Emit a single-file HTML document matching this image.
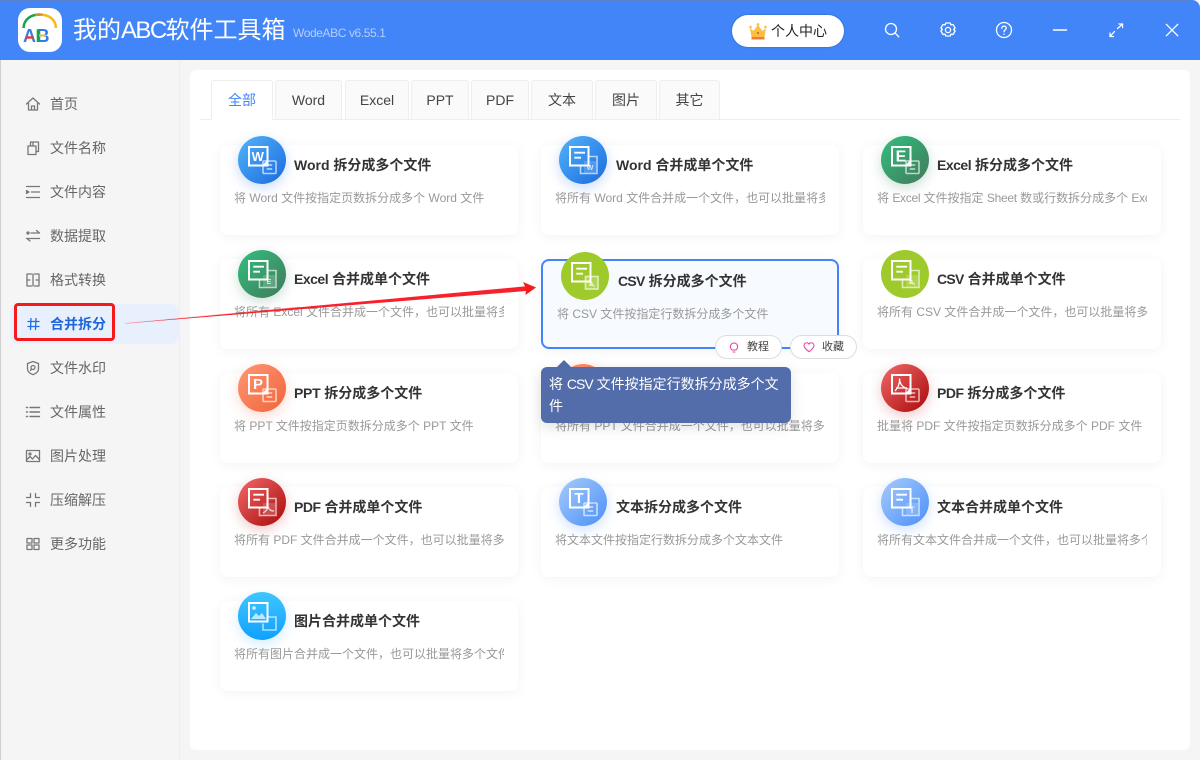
<!DOCTYPE html>
<html lang="zh"><head><meta charset="utf-8"><title>我的ABC软件工具箱</title>
<style>
*{box-sizing:border-box;margin:0;padding:0}
html,body{width:1200px;height:760px;overflow:hidden;background:#f5f5f5;font-family:"Liberation Sans","Noto Sans CJK SC",sans-serif}
.abs{position:absolute}
#hd{position:absolute;left:0;top:0;width:1200px;height:60px;background:#4285f8;border-top-right-radius:8px}
#title{position:absolute;left:73px;top:16px;font-size:24px;line-height:30px;color:#fff;white-space:nowrap}
#title span{letter-spacing:-1.6px}
#ver{position:absolute;left:293px;top:24px;font-size:12px;line-height:18px;letter-spacing:-.4px;color:rgba(255,255,255,.6);white-space:nowrap}
#pill{position:absolute;left:732px;top:15px;width:112px;height:32px;border-radius:16px;background:#fff;box-shadow:0 0 2px rgba(0,0,0,.25)}
#pill span{position:absolute;left:39px;top:6px;font-size:14px;line-height:20px;color:#222;white-space:nowrap}
.hi{position:absolute;top:20px;width:20px;height:20px;fill:none;stroke:#fff;stroke-width:1.3;stroke-linecap:round;stroke-linejoin:round}
#div{position:absolute;left:179px;top:60px;width:1px;height:700px;background:#eee}
.n{position:absolute;left:50px;font-size:14px;line-height:20px;color:#666;white-space:nowrap}
.si{position:absolute;left:25px;width:16px;height:16px;fill:none;stroke:#777;stroke-width:1.3;stroke-linecap:round;stroke-linejoin:round}
#act{position:absolute;left:10px;top:304px;width:169px;height:40px;background:#e8f0fe;border-radius:8px}
#main{position:absolute;left:190px;top:70px;width:1000px;height:680px;background:#fff;border-radius:6px}
.t{position:absolute;top:80px;height:40px;background:#fafafa;border:1px solid #eee;border-radius:3px 3px 0 0;font-size:14px;line-height:39px;text-align:center;color:#444;white-space:nowrap}
#tl{position:absolute;left:200px;top:119px;width:980px;height:1px;background:#eee}
.c{position:absolute;width:298px;height:90px;background:#fff;border-radius:8px;box-shadow:0 2px 12px rgba(0,0,0,.05)}
.c.s{background:#f7faff;border:2px solid #4285f8}
.i{position:absolute;left:18px;top:-9px;width:48px;height:48px;border-radius:50%}
.i svg{position:absolute;left:0;top:0;width:48px;height:48px}
.c b{position:absolute;left:74px;top:10px;font-size:14px;line-height:20px;color:#333;font-weight:700;white-space:nowrap}
.c.m b{left:75px}
.z3{letter-spacing:-.7px}
.z2{letter-spacing:-.5px}
.z1{letter-spacing:-.3px}
.c p{position:absolute;left:14px;top:43px;width:270px;font-size:12px;line-height:20px;color:#999;white-space:nowrap;overflow:hidden}
.gw{background:linear-gradient(135deg,#52b4fa,#1b6ade);box-shadow:0 4px 12px rgba(40,120,240,.25)}
.ge{background:linear-gradient(135deg,#33bf7d,#41795c);box-shadow:0 4px 12px rgba(50,130,90,.25)}
.gc{background:#9fca2b}
.gp{background:linear-gradient(135deg,#ff9776,#f0643a);box-shadow:0 4px 12px rgba(240,100,60,.25)}
.gd{background:linear-gradient(135deg,#f2696a,#a90a0a);box-shadow:0 4px 12px rgba(200,40,40,.25)}
.gt{background:linear-gradient(135deg,#a8cbfb,#4a90f8);box-shadow:0 4px 12px rgba(70,140,250,.25)}
.gi{background:linear-gradient(180deg,#40c6ff,#10a0ff);box-shadow:0 4px 12px rgba(20,160,255,.2)}
.f{fill:none;stroke:#fff;stroke-width:2}
.k{fill:none;stroke:rgba(255,255,255,.65);stroke-width:1.6}
.ln{stroke:#fff;stroke-width:1.8;fill:none}
.lk{stroke:rgba(255,255,255,.7);stroke-width:1.4;fill:none}
.l{font-family:"Liberation Sans",sans-serif;font-weight:700;fill:#fff;text-anchor:middle}
.ls{font-family:"Liberation Sans",sans-serif;font-weight:700;fill:rgba(255,255,255,.75);text-anchor:middle;font-size:7px}
.bt{position:absolute;top:335px;height:24px;background:#fff;border:1px solid #ddd;border-radius:12px;font-size:11px;line-height:22px;color:#444;white-space:nowrap}
.bt svg{position:absolute;left:12px;top:5px;width:12px;height:12px;fill:none;stroke:#ee3fa4;stroke-width:1.2}
.bt span{position:absolute;left:31px;top:0}
#tip{position:absolute;left:541px;top:367px;width:250px;height:56px;background:#536dab;border-radius:6px;color:#fff;font-size:14px;line-height:22px;padding:6px 8px;box-shadow:0 4px 14px rgba(0,0,0,.12);white-space:nowrap}
#tipa{position:absolute;left:557px;top:360px;width:0;height:0;border-left:7.5px solid transparent;border-right:7.5px solid transparent;border-bottom:7px solid #536dab}
</style></head><body>
<svg width="0" height="0" style="position:absolute">
<defs>
<g id="sb"><rect class="k" x="25" y="25" width="13" height="12.500" rx="1"/><path class="lk" d="M28.700 29h5.500M28.700 33h5.500"/><path d="M25.500 29.500l4-4" stroke="#fff" stroke-width="2"/></g>
<g id="mf"><rect class="f" x="11" y="11" width="18.500" height="18.500"/><path class="ln" d="M15.300 16.700h10.700M15.300 21.700h6.700"/></g>
<g id="mb"><path class="k" d="M30.500 20.500H38V37.500H21.500V30.500"/><rect x="25" y="25" width="12" height="12" fill="rgba(255,255,255,.18)"/></g>
</defs>
</svg>

<div id="hd"></div>
<div class="abs" style="left:0;top:0;width:1190px;height:1px;background:#5a7fc4"></div>
<div class="abs" style="left:0;top:60px;width:1px;height:700px;background:#d0d0d0"></div>
<div class="abs" style="left:18px;top:8px;width:44px;height:44px;background:#fff;border-radius:12px"></div>
<svg class="abs" style="left:18px;top:8px;width:44px;height:44px" viewBox="0 0 44 44">
<path d="M5.500 20C6 11 13 6.500 22 6.500" fill="none" stroke="#17a34a" stroke-width="2.500"/>
<path d="M17 6.900C19 6.500 23 6.400 25 6.800" fill="none" stroke="#c8952a" stroke-width="2.500"/>
<path d="M24.500 6.700C32 7.500 37.500 12 38 20" fill="none" stroke="#f5b91e" stroke-width="2.500"/>
<text x="11.500" y="34" font-family="Liberation Sans" font-size="18" font-weight="700" fill="#2f7df0" text-anchor="middle">A</text>
<text x="25" y="34" font-family="Liberation Sans" font-size="18" font-weight="700" fill="#2f7df0" text-anchor="middle">B</text>
<path d="M7.500 29.500h8" stroke="#e53935" stroke-width="2.400"/><path d="M20 21.500v12.500" stroke="#17a34a" stroke-width="2.600"/>
<path d="M21 27.500h7" stroke="#f5b91e" stroke-width="2"/>
</svg>
<div id="title">我的<span>ABC</span>软件工具箱</div>
<div id="ver">WodeABC v6.55.1</div>
<div id="pill"><span>个人中心</span></div>
<svg class="abs" style="left:749px;top:23px;width:18px;height:17px" viewBox="0 0 18 17">
<path d="M1 5l3.500 3L9 2l4.500 6L17 5l-1.500 9h-13z" fill="#fbbf3f"/><circle cx="1.500" cy="4" r="1.300" fill="#fbbf3f"/><circle cx="9" cy="1.500" r="1.400" fill="#fbbf3f"/><circle cx="16.500" cy="4" r="1.300" fill="#fbbf3f"/><rect x="2.500" y="14" width="13" height="2.500" fill="#f5793a"/><circle cx="9" cy="10" r="1" fill="#e5484d"/></svg>

<svg class="hi" style="left:882px" viewBox="0 0 20 20"><circle cx="9" cy="9" r="5.500"/><path d="M13 13l3.800 3.800"/></svg>
<svg class="hi" style="left:938px" viewBox="0 0 20 20"><path d="M7.800 3h4.400l.7 1.900 2.100-.4 2.100 3.500-1.400 1.500 1.400 1.500-2.100 3.500-2.100-.4-.7 1.900H7.800l-.7-1.900-2.100.4-2.100-3.500 1.400-1.500-1.400-1.500 2.100-3.500 2.100.4z"/><circle cx="10" cy="10" r="2.600"/></svg>
<svg class="hi" style="left:994px" viewBox="0 0 20 20"><circle cx="10" cy="10" r="7.500"/><path d="M7.800 8.200C7.800 5.500 12.300 5.500 12.300 8c0 1.800-2.300 1.800-2.300 3.800"/><path d="M10 14.200v.2"/></svg>
<svg class="hi" style="left:1050px" viewBox="0 0 20 20"><path d="M3.500 10h13" stroke-width="1.600"/></svg>
<svg class="hi" style="left:1106px" viewBox="0 0 20 20"><path d="M11.500 8.500L16.500 4M13 4h3.500v3.500M8.500 11.500L4 16.500M4 13v3.500h3.500"/></svg>
<svg class="hi" style="left:1162px" viewBox="0 0 20 20"><path d="M4.300 4.300l11.500 11.500M15.800 4.300L4.300 15.800"/></svg>

<div id="act"></div>
<div id="div"></div>

<svg class="si" style="top:96px" viewBox="0 0 16 16"><path d="M1.500 8L8 2l6.500 6M3.500 7v7h9V7M6.500 14v-4h3v4"/></svg>
<div class="n" style="top:94px">首页</div>
<svg class="si" style="top:140px" viewBox="0 0 16 16"><path d="M3 6h8v8.500H3zM5.500 6V2h8v9.500H11M8 2v4"/></svg>
<div class="n" style="top:138px">文件名称</div>
<svg class="si" style="top:184px" viewBox="0 0 16 16"><path d="M1.500 2.500h13M6.500 8h8M1.500 13.500h13"/><path d="M1.500 6.500L4 8l-2.500 1.500z" fill="#777"/></svg>
<div class="n" style="top:182px">文件内容</div>
<svg class="si" style="top:228px" viewBox="0 0 16 16"><path d="M6 5h8.500M11.500 2.500L14.500 5M1.500 10.500h13M5 13l-3-2.500" /><circle cx="3" cy="5" r="1" fill="#777"/></svg>
<div class="n" style="top:226px">数据提取</div>
<svg class="si" style="top:272px" viewBox="0 0 16 16"><path d="M6.500 2H2v12h4.500M9.500 2H14v12H9.500M8 2v12M2 8h3M11 8h3"/></svg>
<div class="n" style="top:270px">格式转换</div>
<svg class="si" style="top:316px;stroke:#1f6fe5;stroke-width:1.300" viewBox="0 0 16 16"><path d="M6 2.500l-.5 11M11 2.500l-.5 11M3 5.500h11M3 10.500h11"/></svg>
<div class="n" style="top:314px;color:#1f66d8;font-weight:700">合并拆分</div>
<svg class="si" style="top:360px" viewBox="0 0 16 16"><path d="M2.500 3.500L8 1.500l5.500 2v5.500c0 2.800-2.500 4.500-5.500 5.700C5 13.500 2.500 11.800 2.500 9z"/><circle cx="8" cy="7.500" r="2"/><path d="M6.500 9L5.500 10.500"/></svg>
<div class="n" style="top:358px">文件水印</div>
<svg class="si" style="top:404px" viewBox="0 0 16 16"><path d="M5 3.500h9.500M5 8h9.500M5 12.500h9.500M1.500 3.500h1M1.500 8h1M1.500 12.500h1" stroke-width="1.400"/></svg>
<div class="n" style="top:402px">文件属性</div>
<svg class="si" style="top:448px" viewBox="0 0 16 16"><rect x="1.500" y="2.500" width="13" height="11"/><circle cx="5" cy="6" r="1"/><path d="M1.500 12l3.500-3.500 2.500 2.500 3-3.500 4 4"/></svg>
<div class="n" style="top:446px">图片处理</div>
<svg class="si" style="top:492px" viewBox="0 0 16 16"><path d="M5.500 1.500v4h-4M10.500 1.500v4h4M5.500 14.500v-4h-4M10.500 14.500v-4h4"/></svg>
<div class="n" style="top:490px">压缩解压</div>
<svg class="si" style="top:536px" viewBox="0 0 16 16"><rect x="2" y="2.500" width="5" height="4.500"/><rect x="9" y="2.500" width="5" height="4.500"/><rect x="2" y="9" width="5" height="4.500"/><rect x="9" y="9" width="5" height="4.500"/></svg>
<div class="n" style="top:534px">更多功能</div>

<div id="main"></div>
<div id="tl"></div>
<div class="t" style="left:211px;width:62px;background:#fff;color:#4285f8;border-bottom-color:#fff">全部</div>
<div class="t" style="left:275px;width:67px">Word</div>
<div class="t" style="left:345px;width:64px">Excel</div>
<div class="t" style="left:411px;width:58px">PPT</div>
<div class="t" style="left:471px;width:58px">PDF</div>
<div class="t" style="left:531px;width:62px">文本</div>
<div class="t" style="left:595px;width:62px">图片</div>
<div class="t" style="left:659px;width:61px">其它</div>

<div class="c" style="left:220px;top:145px"><div class="i gw"><svg viewBox="0 0 48 48"><rect class="f" x="11" y="11" width="18.500" height="18.500"/><text class="l" x="19.800" y="25" font-size="13">W</text><use href="#sb"/></svg></div><b>Word 拆分成多个文件</b><p>将 Word 文件按指定页数拆分成多个 Word 文件</p></div>
<div class="c m" style="left:541px;top:145px"><div class="i gw"><svg viewBox="0 0 48 48"><use href="#mb"/><use href="#mf"/><text class="ls" x="31" y="34">W</text></svg></div><b>Word 合并成单个文件</b><p>将所有 Word 文件合并成一个文件，也可以批量将多个文件</p></div>
<div class="c" style="left:863px;top:145px"><div class="i ge"><svg viewBox="0 0 48 48"><rect class="f" x="11" y="11" width="18.500" height="18.500"/><text class="l" x="20" y="25.500" font-size="16">E</text><use href="#sb"/></svg></div><b><span class="z2">Excel</span> 拆分成多个文件</b><p>将 <span class="z1">Excel</span> 文件按指定 <span class="z1">Sheet</span> 数或行数拆分成多个 <span class="z1">Excel</span> 文件</p></div>

<div class="c" style="left:220px;top:259px"><div class="i ge"><svg viewBox="0 0 48 48"><use href="#mb"/><use href="#mf"/><text class="ls" x="31" y="34">E</text></svg></div><b><span class="z2">Excel</span> 合并成单个文件</b><p>将所有 Excel 文件合并成一个文件，也可以批量将多个文件</p></div>
<div class="c s m" style="left:541px;top:259px"><div class="i gc"><svg viewBox="0 0 48 48"><rect x="24.500" y="24.500" width="12.500" height="12.500" fill="rgba(255,255,255,.2)" stroke="rgba(255,255,255,.65)" stroke-width="1.600"/><use href="#mf"/><text class="ls" x="31" y="34" style="fill:#fff">a,</text></svg></div><b><span class="z3">CSV</span> 拆分成多个文件</b><p>将 CSV 文件按指定行数拆分成多个文件</p></div>
<div class="c" style="left:863px;top:259px"><div class="i gc"><svg viewBox="0 0 48 48"><use href="#mb"/><use href="#mf"/><text class="ls" x="31" y="34" style="fill:#fff">a,</text></svg></div><b><span class="z3">CSV</span> 合并成单个文件</b><p>将所有 CSV 文件合并成一个文件，也可以批量将多个文件</p></div>

<div class="c" style="left:220px;top:373px"><div class="i gp"><svg viewBox="0 0 48 48"><rect class="f" x="11" y="11" width="18.500" height="18.500"/><text class="l" x="20" y="24.800" font-size="15">P</text><use href="#sb"/></svg></div><b><span class="z1">PPT</span> 拆分成多个文件</b><p>将 PPT 文件按指定页数拆分成多个 PPT 文件</p></div>
<div class="c m" style="left:541px;top:373px"><div class="i gp"><svg viewBox="0 0 48 48"><use href="#mb"/><use href="#mf"/></svg></div><b><span class="z1">PPT</span> 合并成单个文件</b><p>将所有 PPT 文件合并成一个文件，也可以批量将多个文件</p></div>
<div class="c" style="left:863px;top:373px"><div class="i gd"><svg viewBox="0 0 48 48"><rect class="f" x="11" y="11" width="18.500" height="18.500"/><path d="M14 27c3-3 5-8 4.500-12.500M18.500 14.500c0 5 3 9 8 10M15 24h11" fill="none" stroke="#fff" stroke-width="1.300"/><use href="#sb"/></svg></div><b><span class="z2">PDF</span> 拆分成多个文件</b><p>批量将 PDF 文件按指定页数拆分成多个 PDF 文件</p></div>

<div class="c" style="left:220px;top:487px"><div class="i gd"><svg viewBox="0 0 48 48"><use href="#mb"/><use href="#mf"/><path d="M25 35c2-1 4-3 5-6 1 3 3 4 6 4" class="lk"/></svg></div><b><span class="z2">PDF</span> 合并成单个文件</b><p>将所有 PDF 文件合并成一个文件，也可以批量将多个文件</p></div>
<div class="c m" style="left:541px;top:487px"><div class="i gt"><svg viewBox="0 0 48 48"><rect class="f" x="11" y="11" width="18.500" height="18.500"/><text class="l" x="20" y="25" font-size="15">T</text><use href="#sb"/></svg></div><b>文本拆分成多个文件</b><p>将文本文件按指定行数拆分成多个文本文件</p></div>
<div class="c" style="left:863px;top:487px"><div class="i gt"><svg viewBox="0 0 48 48"><use href="#mb"/><use href="#mf"/><text class="ls" x="31" y="35" style="font-size:9px">T</text></svg></div><b>文本合并成单个文件</b><p>将所有文本文件合并成一个文件，也可以批量将多个文件</p></div>

<div class="c" style="left:220px;top:601px"><div class="i gi"><svg viewBox="0 0 48 48"><rect class="f" x="11" y="11" width="18.500" height="18.500"/><circle cx="16" cy="16" r="1.800" fill="rgba(255,255,255,.8)"/><path d="M13 27l5-6 3 3 3-3 4 6z" fill="rgba(255,255,255,.7)"/><path class="k" d="M30.500 25H38V38H25V31.500"/></svg></div><b>图片合并成单个文件</b><p>将所有图片合并成一个文件，也可以批量将多个文件合并</p></div>

<div class="bt" style="left:715px;width:67px"><svg viewBox="0 0 14 14"><path d="M5 10.500C3.500 9.500 2.800 8 2.800 6.500a4.200 4.200 0 018.400 0c0 1.500-.7 3-2.200 4zM5.500 12.800h3"/></svg><span>教程</span></div>
<div class="bt" style="left:790px;width:67px"><svg viewBox="0 0 14 14"><path d="M7 12.500C3 9.500 1.200 7.500 1.200 5.200 1.200 3.300 2.700 2 4.300 2 5.400 2 6.400 2.600 7 3.600 7.600 2.600 8.600 2 9.700 2c1.600 0 3.100 1.300 3.100 3.200 0 2.300-1.800 4.300-5.800 7.300z"/></svg><span>收藏</span></div>

<div id="tipa"></div>
<div id="tip">将 <span style="letter-spacing:-1px">CSV</span> 文件按指定行数拆分成多个文<br>件</div>

<svg class="abs" style="left:0;top:0;width:1200px;height:760px;pointer-events:none" viewBox="0 0 1200 760">
<path d="M125 323.500L526 286.300V291z" fill="#f8202a"/>
<path d="M536 287.500L523 282 526 288.500 525.500 295z" fill="#f51a1c"/>
<path d="M125 323.500L300 307" stroke="rgba(248,40,50,.35)" stroke-width=".8"/>
</svg>
<div class="abs" style="left:14px;top:303px;width:101px;height:38px;border:3px solid #f5191c;border-radius:4px"></div>
</body></html>
